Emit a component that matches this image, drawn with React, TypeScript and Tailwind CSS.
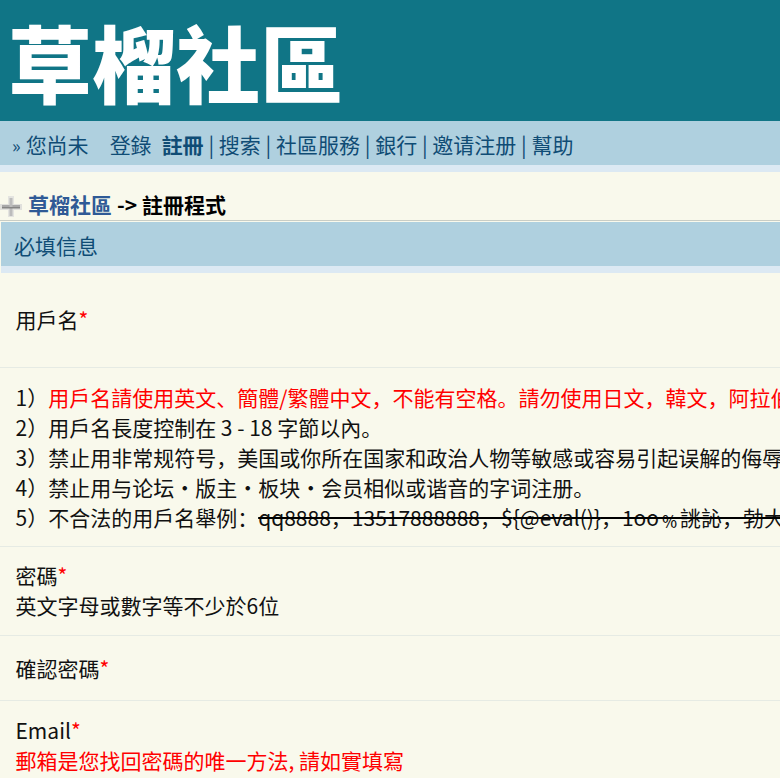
const sans = "font-['Noto_Sans_CJK_SC','Noto_Sans',sans-serif]";

function Star() {
  return <span className="text-[#ff0000]">*</span>;
}

function FormRow({ className, children }: { className: string; children: React.ReactNode }) {
  return <div className={`border-b border-[#e6ebe4] pl-[15.5px] text-[21px] leading-[30px] whitespace-nowrap ${className}`}>{children}</div>;
}

export default function App() {
  return (
    <div className={`h-[778px] w-[780px] overflow-hidden bg-[#f9f9ec] text-[#111] ${sans}`}>
      {/* Banner */}
      <div className="flex h-[121px] items-center bg-[#107586] pl-[8px]">
        <span className="text-[84px] leading-none font-black whitespace-nowrap text-white">草榴社區</span>
      </div>

      {/* Nav */}
      <div className="flex h-[44px] items-center bg-[#afd0df] pt-[4px] pl-3 text-[21px] whitespace-nowrap text-[#0f4c75]">
        <span className="text-[18px]">»</span>
        <span className="ml-[5px]">您尚未</span>
        <span className="ml-[21px]">登錄</span>
        <span className="ml-[10px] font-bold">註冊</span>
        <span className="ml-[4.75px]">|</span>
        <span className="ml-[4.75px]">搜索</span>
        <span className="ml-[4.75px]">|</span>
        <span className="ml-[4.75px]">社區服務</span>
        <span className="ml-[4.75px]">|</span>
        <span className="ml-[4.75px]">銀行</span>
        <span className="ml-[4.75px]">|</span>
        <span className="ml-[4.75px]">邀请注册</span>
        <span className="ml-[4.75px]">|</span>
        <span className="ml-[4.75px]">幫助</span>
      </div>
      <div className="h-[7px] bg-[#dce9f3]" />

      {/* Breadcrumb */}
      <div className="flex h-[48px] items-end text-[21px] leading-[32px] font-bold whitespace-nowrap">
        <svg width="22" height="24" viewBox="0 0 22 24" className="mb-[2px] shrink-0">
          <rect x="8" y="2" width="6" height="21" fill="#e4e4e0" />
          <rect x="0" y="10" width="22" height="6" fill="#e0e0dc" />
          <rect x="2" y="11" width="18" height="3" fill="#a8a8a8" />
          <rect x="9.5" y="4" width="3" height="18" fill="#bcbcbc" />
          <rect x="2" y="13" width="18" height="1.5" fill="#858585" />
        </svg>
        <span className="ml-[6px] text-[#2f5a96]">草榴社區</span>
        <span className="ml-[5px] text-black">-&gt; 註冊程式</span>
      </div>

      {/* Form table */}
      <div className="border-t border-[#c9cdc6] pt-px pl-px">
        <div className="flex h-[44px] items-center bg-[#afd0df] pt-[3px] pl-[13px] text-[21px] text-[#0f4c75]">必填信息</div>
        <div className="h-[7px] bg-[#dce9f3]" />
      </div>

      <FormRow className="h-[95px] pt-[31px]">
        用戶名<Star />
      </FormRow>
      <FormRow className="h-[179px] pt-[15px]">
        <div className="-mt-px">1）<span className="text-[#ff0000]">用戶名請使用英文、簡體/繁體中文，不能有空格。請勿使用日文，韓文，阿拉伯文等</span></div>
        <div>2）用戶名長度控制在 3 - 18 字節以內。</div>
        <div>3）禁止用非常规符号，美国或你所在国家和政治人物等敏感或容易引起误解的侮辱性词语</div>
        <div>4）禁止用与论坛・版主・板块・会员相似或谐音的字词注册。</div>
        <div>
          5）不合法的用戶名舉例：<span className="line-through decoration-black decoration-2">qq8888，13517888888，${"{@eval()}"}，1oo﹪誂訫，勃大精深</span>
        </div>
      </FormRow>
      <FormRow className="h-[89px] pt-[13px]">
        <div>密碼<Star /></div>
        <div>英文字母或數字等不少於6位</div>
      </FormRow>
      <FormRow className="h-[65px] pt-[17px]">
        確認密碼<Star />
      </FormRow>
      <div className="pt-[14px] pl-[15.5px] text-[21px] leading-[30px] whitespace-nowrap">
        <div>Email<Star /></div>
        <div className="text-[#ff0000]">郵箱是您找回密碼的唯一方法, 請如實填寫</div>
      </div>
    </div>
  );
}
